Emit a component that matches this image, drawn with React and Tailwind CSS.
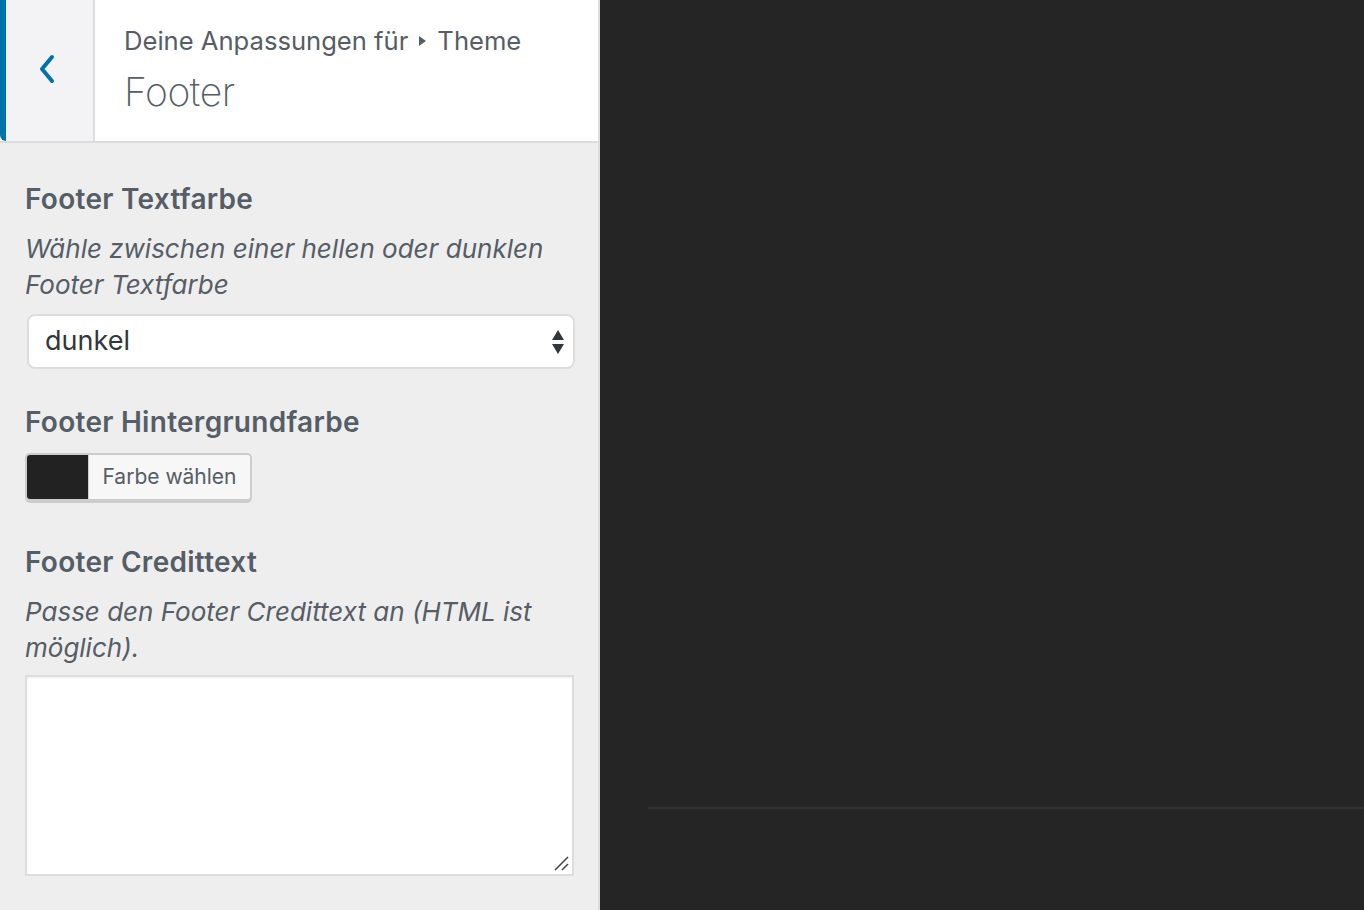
import React from "react";

const font = { fontFamily: "Inter, 'Noto Sans', sans-serif" };

const ChevronLeft = () => (
  <svg width="20" height="32" viewBox="0 0 20 32" fill="none">
    <path d="M15 4 L5 16 L15 28" stroke="#0073aa" strokeWidth="4" strokeLinecap="round" strokeLinejoin="round" />
  </svg>
);

const SelectArrows = () => (
  <svg width="14" height="26" viewBox="0 0 14 26">
    <path d="M7 1 L13 11 L1 11 Z" fill="#32373c" />
    <path d="M7 25 L13 15 L1 15 Z" fill="#32373c" />
  </svg>
);

const Section = ({ title, desc, children }) => (
  <div className="flex flex-col">
    <h3 className="text-[28px] font-semibold text-[#555d66] leading-[34px] tracking-[0.01em]">{title}</h3>
    {desc && (
      <p className="mt-[15px] text-[26px] italic text-[#555d66] leading-[36px]">{desc}</p>
    )}
    {children}
  </div>
);

export default function App() {
  return (
    <div className="flex w-[1364px] h-[910px] overflow-hidden" style={font}>
      {/* sidebar */}
      <div className="w-[600px] h-full bg-[#eeeeee] border-r-2 border-[#dddddd] flex flex-col">
        <div className="h-[143px] bg-white border-b-2 border-[#dddddd] flex">
          <div className="w-[95px] h-full bg-[#f3f3f5] border-l-[6px] border-[#0073aa] border-r-2 border-r-[#dddddd] rounded-bl-md flex items-center justify-center pr-[6px] pb-[4px]">
            <ChevronLeft />
          </div>
          <div className="flex flex-col pl-[29px] pt-[24px]">
            <div className="text-[25.6px] text-[#555d66] leading-[34px] flex items-center">
              Deine Anpassungen für
              <svg className="mx-[11px]" width="7" height="10" viewBox="0 0 7 10">
                <path d="M0 0 L7 5 L0 10 Z" fill="#555d66" />
              </svg>
              Theme
            </div>
            <div className="text-[39px] font-extralight text-[#555d66] leading-[48px] mt-[10px] tracking-[-0.01em]">
              Footer
            </div>
          </div>
        </div>

        <div className="flex flex-col px-[25px] pt-[39px] gap-0">
          <Section
            title="Footer Textfarbe"
            desc="Wähle zwischen einer hellen oder dunklen Footer Textfarbe"
          >
            <div className="mt-[11px] ml-[2px] w-[548px] h-[55px] bg-white border-2 border-[#dddddd] rounded-[8px] flex items-center justify-between pl-[16px] pr-[8px]">
              <span className="text-[27px] text-[#32373c]">dunkel</span>
              <SelectArrows />
            </div>
          </Section>

          <div className="mt-[36px]">
            <Section title="Footer Hintergrundfarbe">
              <div className="mt-[14px] w-[227px] h-[48px] flex border-2 border-[#cccccc] rounded-[5px] overflow-hidden shadow-[0_2px_0_#cccccc]">
                <div className="w-[61px] h-full bg-[#222222]" />
                <div className="flex-1 bg-[#f7f7f7] border-l border-[#cccccc] flex items-center justify-center text-[21px] text-[#555d66]">
                  Farbe wählen
                </div>
              </div>
            </Section>
          </div>

          <div className="mt-[44px]">
            <Section
              title="Footer Credittext"
              desc="Passe den Footer Credittext an (HTML ist möglich)."
            >
              <div className="mt-[9px] w-[549px] h-[201px] bg-white border-2 border-[#dddddd] relative shadow-[inset_0_1px_2px_rgba(0,0,0,0.07)]">
                <svg className="absolute right-[3px] bottom-[3px]" width="15" height="15" viewBox="0 0 15 15">
                  <path d="M14 1 L1 14 M14 8 L8 14" stroke="#444" strokeWidth="1.5" />
                </svg>
              </div>
            </Section>
          </div>
        </div>
      </div>

      {/* preview */}
      <div className="flex-1 h-full bg-[#252525] flex flex-col">
        <div className="h-[807px]" />
        <div className="ml-[48px] h-[2px] bg-[#333333]" />
      </div>
    </div>
  );
}
